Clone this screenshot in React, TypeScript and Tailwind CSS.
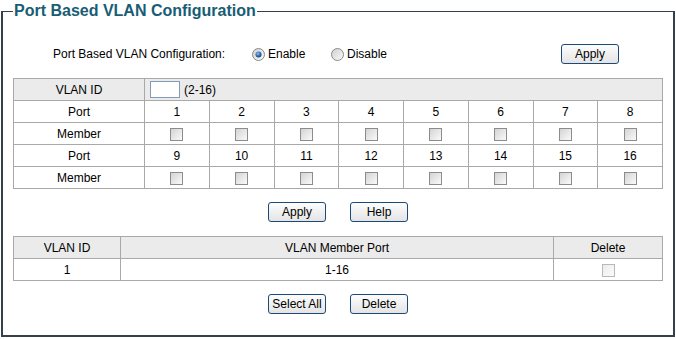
import React from "react";

const font = { fontFamily: '"Liberation Sans", Arial, sans-serif' };

function Btn({ children, w = "w-[58px]" }: { children: React.ReactNode; w?: string }) {
  return (
    <button
      className={`${w} h-[20px] rounded-[3px] border border-[#1c4a78] bg-gradient-to-b from-[#fdfdfd] to-[#e4e4e4] text-[12px] leading-[18px] text-black p-0`}
    >
      {children}
    </button>
  );
}

function Check({ disabled = false }: { disabled?: boolean }) {
  return disabled ? (
    <span className="inline-block align-middle w-[13px] h-[13px] border border-[#b8b8b8] bg-gradient-to-br from-[#ececec] to-[#fbfbfb]" />
  ) : (
    <span className="inline-block align-middle w-[13px] h-[13px] border border-[#8c8c8c] bg-gradient-to-br from-[#d4d4d4] to-[#fafafa]" />
  );
}

function Radio({ on }: { on: boolean }) {
  return (
    <svg width="13" height="13" viewBox="0 0 13 13" className="inline-block">
      <defs>
        <linearGradient id={on ? "rgOn" : "rgOff"} x1="0" y1="0" x2="1" y2="1">
          <stop offset="0" stopColor="#cfcfcf" />
          <stop offset="1" stopColor="#fbfbfb" />
        </linearGradient>
        <radialGradient id="dot" cx="0.4" cy="0.35" r="0.7">
          <stop offset="0" stopColor="#8fc0ec" />
          <stop offset="0.6" stopColor="#2a6ab0" />
          <stop offset="1" stopColor="#123a6a" />
        </radialGradient>
      </defs>
      <circle cx="6.5" cy="6.5" r="6" fill={`url(#${on ? "rgOn" : "rgOff"})`} stroke="#8a8a8a" strokeWidth="1" />
      {on && <circle cx="6.5" cy="6.5" r="3" fill="url(#dot)" />}
    </svg>
  );
}

export default function App() {
  const row1 = [1, 2, 3, 4, 5, 6, 7, 8];
  const row2 = [9, 10, 11, 12, 13, 14, 15, 16];
  const cell = "border border-[#a9a9a9] text-center p-0";
  return (
    <div className="w-[676px] h-[339px] bg-white text-[12px] text-black" style={font}>
      <fieldset className="ml-px w-[674px] h-[337px] border-[#34404a] border-t border-l-2 border-r-2 border-b-2 p-0 m-0">
        <legend className="ml-[10px] px-px text-[16px] leading-[22px] font-bold text-[#185d74]">
          Port Based VLAN Configuration
        </legend>

        <div className="mt-[22px] flex items-center h-[20px]">
          <span className="ml-[50px] w-[199px]">Port Based VLAN Configuration:</span>
          <span className="w-[79px] flex items-center gap-[3px]">
            <Radio on />
            <span>Enable</span>
          </span>
          <span className="flex items-center gap-[3px]">
            <Radio on={false} />
            <span>Disable</span>
          </span>
          <span className="ml-auto mr-[54px]">
            <Btn>Apply</Btn>
          </span>
        </div>

        <table className="mt-[14px] ml-[10px] w-[650px] table-fixed border-collapse">
          <colgroup>
            <col className="w-[131px]" />
            {row1.map((n) => (
              <col key={n} />
            ))}
          </colgroup>
          <tbody>
            <tr className="h-[22px] bg-[#ebebeb]">
              <td className={cell}>VLAN ID</td>
              <td colSpan={8} className="border border-[#a9a9a9] p-0 text-left">
                <div className="flex items-center pl-[5px]">
                  <span className="inline-block w-[30px] h-[17px] border border-[#7f9db9] bg-white" />
                  <span className="ml-[4px]">(2-16)</span>
                </div>
              </td>
            </tr>
            <tr className="h-[22px]">
              <td className={cell}>Port</td>
              {row1.map((n) => (
                <td key={n} className={cell}>
                  {n}
                </td>
              ))}
            </tr>
            <tr className="h-[22px]">
              <td className={cell}>Member</td>
              {row1.map((n) => (
                <td key={n} className={cell}>
                  <Check />
                </td>
              ))}
            </tr>
            <tr className="h-[22px]">
              <td className={cell}>Port</td>
              {row2.map((n) => (
                <td key={n} className={cell}>
                  {n}
                </td>
              ))}
            </tr>
            <tr className="h-[22px]">
              <td className={cell}>Member</td>
              {row2.map((n) => (
                <td key={n} className={cell}>
                  <Check />
                </td>
              ))}
            </tr>
          </tbody>
        </table>

        <div className="mt-[13px] ml-[10px] w-[650px] flex justify-center gap-[24px]">
          <Btn>Apply</Btn>
          <Btn>Help</Btn>
        </div>

        <table className="mt-[14px] ml-[10px] w-[650px] table-fixed border-collapse">
          <colgroup>
            <col className="w-[107px]" />
            <col className="w-[433px]" />
            <col />
          </colgroup>
          <tbody>
            <tr className="h-[22px] bg-[#ebebeb]">
              <td className={cell}>VLAN ID</td>
              <td className={cell}>VLAN Member Port</td>
              <td className={cell}>Delete</td>
            </tr>
            <tr className="h-[22px]">
              <td className={cell}>1</td>
              <td className={cell}>1-16</td>
              <td className={cell}>
                <Check disabled />
              </td>
            </tr>
          </tbody>
        </table>

        <div className="mt-[13px] ml-[10px] w-[650px] flex justify-center gap-[24px]">
          <Btn>Select All</Btn>
          <Btn>Delete</Btn>
        </div>
      </fieldset>
    </div>
  );
}
